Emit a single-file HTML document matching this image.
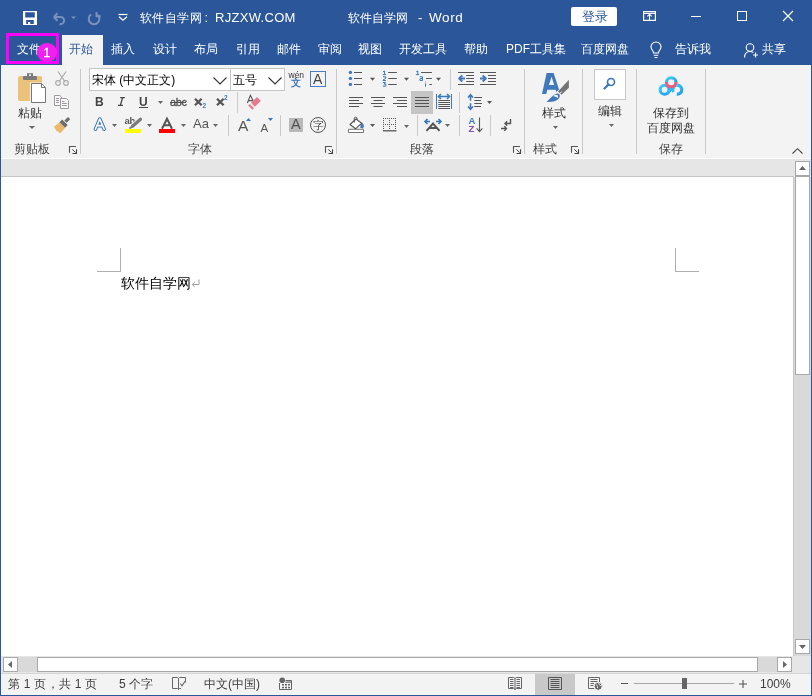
<!DOCTYPE html>
<html><head><meta charset="utf-8">
<style>
*{box-sizing:border-box}
html,body{margin:0;padding:0;width:812px;height:696px;overflow:hidden;background:#fff;font-family:"Liberation Sans",sans-serif;}
.a{position:absolute;white-space:nowrap}
svg.a{overflow:visible}
.tt{color:#fff;font-size:13px;line-height:16px}
.tab{color:#fff;font-size:12px;line-height:16px;top:41px}
.sep{width:1px;background:#c8c8c8}
.gl{font-size:12px;color:#444;line-height:14px;top:141.5px}
.rl{font-size:12px;color:#333;line-height:14px}
.st{font-size:12px;color:#3c3c3c;line-height:14px;top:677px}
</style></head><body><div style="position:absolute;left:0;top:0;width:812px;height:696px;will-change:transform">
<!-- frame -->
<div class="a" style="left:0;top:0;width:812px;height:65px;background:#2b579a"></div>
<div class="a" style="left:0;top:65px;width:812px;height:93px;background:#f3f3f3"></div>
<div class="a" style="left:0;top:158px;width:812px;height:1px;"></div>
<div class="a" style="left:0;top:159px;width:812px;height:17px;background:#e6e6e6"></div>
<div class="a" style="left:0;top:176px;width:794px;height:1px;background:#c6c6c6"></div>
<div class="a" style="left:0;top:656px;width:812px;height:17px;background:#e6e6e6"></div>
<div class="a" style="left:0;top:673px;width:812px;height:1px;background:#d6d6d6"></div>
<div class="a" style="left:0;top:674px;width:812px;height:22px;background:#f3f3f3"></div>
<div class="a" style="left:0;top:0;width:1px;height:696px;background:#2b579a"></div>
<div class="a" style="left:811px;top:0;width:1px;height:696px;background:#2b579a"></div>
<div class="a" style="left:0;top:695px;width:812px;height:1px;background:#2b579a"></div>

<!-- QAT -->
<svg class="a" style="left:23px;top:11px" width="14" height="14" viewBox="0 0 14 14">
 <path fill="#fff" fill-rule="evenodd" d="M0 0H14V14H0Z M2.2 1.2H11.8V6.6H2.2Z M3.2 9.1H10.8V12.9H7.2V11.1H5V12.9H3.2Z"/>
</svg>
<svg class="a" style="left:52px;top:12px" width="26" height="13" viewBox="0 0 26 13">
 <path d="M1.8 5 L5.5 1.3 M1.8 5 L5.5 8.7 M1.8 5 H8.5 A3.6 3.6 0 0 1 8.5 12.2 H7.5" fill="none" stroke="#7891bd" stroke-width="2"/>
 <path d="M19 4.5H24L21.5 7Z" fill="#7891bd"/>
</svg>
<svg class="a" style="left:87px;top:12px" width="14" height="13" viewBox="0 0 14 13">
 <path d="M4.2 2.4 A5.3 5.3 0 1 0 10.2 2.6" fill="none" stroke="#7891bd" stroke-width="2"/>
 <path d="M9.5 0 V4.2 H13.7" fill="none" stroke="#7891bd" stroke-width="1.9"/>
</svg>
<svg class="a" style="left:118px;top:13px" width="10" height="8" viewBox="0 0 10 8">
 <path d="M0.5 1.5H9.5" stroke="#fff" stroke-width="1.2"/>
 <path d="M1 3.8 L5 7.2 L9 3.8" fill="none" stroke="#fff" stroke-width="1.2"/>
</svg>

<!-- title text -->
<div class="a tt" style="left:140px;top:10px;font-size:12px;letter-spacing:0.4px">软件自学网</div><div class="a tt" style="left:204.5px;top:10px">:</div><div class="a tt" style="left:215px;top:10px;letter-spacing:0.3px">RJZXW.COM</div>
<div class="a tt" style="left:348px;top:10px;font-size:12px">软件自学网</div><div class="a tt" style="left:418px;top:10px">-</div><div class="a tt" style="left:429px;top:10px;font-size:13.5px;letter-spacing:0.6px">Word</div>
<div class="a" style="left:571px;top:7px;width:46px;height:19px;background:#fff;border-radius:2px"></div>
<div class="a" style="left:582px;top:9px;font-size:12.5px;line-height:16px;color:#2b579a">登录</div>
<!-- window buttons -->
<svg class="a" style="left:643px;top:11px" width="13" height="10" viewBox="0 0 13 10">
 <path d="M0.6 0.6H12.4V9.4H0.6Z" fill="none" stroke="#fff" stroke-width="1.2"/>
 <path d="M1 2.4H12" stroke="#fff" stroke-width="1.1"/>
 <path d="M6.5 9V2.8 M4.3 5.4 L6.5 3.2 L8.7 5.4" fill="none" stroke="#fff" stroke-width="1.1"/>
</svg>
<div class="a" style="left:691px;top:16px;width:10px;height:1px;background:#fff"></div>
<div class="a" style="left:737px;top:11px;width:10px;height:10px;border:1px solid #fff"></div>
<svg class="a" style="left:783px;top:11px" width="10" height="10" viewBox="0 0 10 10">
 <path d="M0 0L10 10M10 0L0 10" stroke="#fff" stroke-width="1.1"/>
</svg>

<!-- tabs -->
<div class="a" style="left:62px;top:35px;width:41px;height:30px;background:#f3f3f3"></div>
<div class="a tab" style="left:69px;color:#2b579a">开始</div>
<div class="a tab" style="left:111px">插入</div>
<div class="a tab" style="left:153px">设计</div>
<div class="a tab" style="left:194px">布局</div>
<div class="a tab" style="left:236px">引用</div>
<div class="a tab" style="left:277px">邮件</div>
<div class="a tab" style="left:318px">审阅</div>
<div class="a tab" style="left:358px">视图</div>
<div class="a tab" style="left:399px">开发工具</div>
<div class="a tab" style="left:464px">帮助</div>
<div class="a tab" style="left:506px">PDF工具集</div>
<div class="a tab" style="left:581px">百度网盘</div>
<div class="a tab" style="left:675px">告诉我</div>
<div class="a tab" style="left:762px">共享</div>
<svg class="a" style="left:650px;top:42px" width="12" height="17" viewBox="0 0 12 17">
 <path d="M3.5 11 C3.5 8.5 1 7.5 1 5 A5 5 0 0 1 11 5 C11 7.5 8.5 8.5 8.5 11 Z M3.8 13.2H8.2 M4.5 15.5H7.5" fill="none" stroke="#fff" stroke-width="1.1"/>
</svg>
<svg class="a" style="left:744px;top:43px" width="15" height="15" viewBox="0 0 15 15">
 <circle cx="6" cy="4.5" r="3.8" fill="none" stroke="#fff" stroke-width="1.1"/>
 <path d="M0.6 14.5 C0.6 10.5 3 8.5 6 8.5 C7.5 8.5 8.5 9 9.3 9.6" fill="none" stroke="#fff" stroke-width="1.1"/>
 <path d="M11.5 9.5V14.5M9 12H14" stroke="#fff" stroke-width="1.1"/>
</svg>
<div class="a tab" style="left:17px">文件</div>
<!-- marker -->
<div class="a" style="left:6px;top:33px;width:53px;height:31px;border:3px solid #f0f"></div>
<div class="a" style="left:37px;top:43px;width:19.5px;height:19px;border-radius:50%;background:#f020f0;color:#fff;font-size:12.5px;line-height:21px;text-align:center;-webkit-text-stroke:0.3px #fff">1</div>

<!-- ribbon separators -->
<div class="a sep" style="left:80px;top:69px;height:85px"></div>
<div class="a sep" style="left:336px;top:69px;height:85px"></div>
<div class="a sep" style="left:524px;top:69px;height:85px"></div>
<div class="a sep" style="left:582px;top:69px;height:85px"></div>
<div class="a sep" style="left:636px;top:69px;height:85px"></div>
<div class="a sep" style="left:705px;top:69px;height:85px"></div>
<div class="a gl" style="left:14px">剪贴板</div>
<div class="a gl" style="left:188px">字体</div>
<div class="a gl" style="left:410px">段落</div>
<div class="a gl" style="left:533px">样式</div>
<div class="a gl" style="left:659px">保存</div>

<!-- clipboard group -->
<svg class="a" style="left:17px;top:72px" width="32" height="32" viewBox="0 0 32 32">
 <rect x="1" y="4" width="24" height="25" rx="2" fill="#ebc27a"/>
 <rect x="6" y="4" width="14" height="4" rx="1" fill="#7a7a7a"/>
 <path d="M10 1.2 H16 V5 H10Z" fill="#7a7a7a"/>
 <rect x="12" y="2.3" width="2" height="1.6" fill="#f3f3f3"/>
 <path d="M14 11.5 H24.5 L28.5 15.5 V30.5 H14Z" fill="#fff" stroke="#f3f3f3" stroke-width="2.2"/>
 <path d="M14.5 11.5 H24.5 L28.5 15.5 V30.5 H14.5Z" fill="#fff" stroke="#767676" stroke-width="1"/>
 <path d="M24.5 11.5 V15.5 H28.5" fill="none" stroke="#767676" stroke-width="1"/>
</svg>
<div class="a rl" style="left:18px;top:106px;font-size:12px;line-height:15px">粘贴</div>
<svg class="a" style="left:29px;top:126px" width="6" height="3" viewBox="0 0 6 3"><path d="M0 0H6L3 3Z" fill="#666"/></svg>
<svg class="a" style="left:55px;top:71px" width="14" height="15" viewBox="0 0 14 15">
 <path d="M3 0.5 L9.5 10 M11 0.5 L4.5 10" stroke="#aaa" stroke-width="1.2" fill="none"/>
 <circle cx="3" cy="12" r="2.3" fill="none" stroke="#aaa" stroke-width="1.2"/>
 <circle cx="11" cy="12" r="2.3" fill="none" stroke="#aaa" stroke-width="1.2"/>
</svg>
<svg class="a" style="left:50px;top:90px" width="24" height="44" viewBox="50 90 24 44">
 <path d="M54.5 95.5 H59.8 L61.5 97.2 V105.5 H54.5Z" fill="#fbf8fb" stroke="#9a9a9a" stroke-width="1"/>
 <path d="M56 98.5H59 M56 100.5H59 M56 102.5H59" stroke="#9a9a9a" stroke-width="1"/>
 <path d="M60.5 98.5 H66.3 L68.5 100.7 V108.5 H60.5Z" fill="#fbf8fb" stroke="#9a9a9a" stroke-width="1"/>
 <path d="M62 101.5H64.5 M62 103.5H67 M62 105.5H67" stroke="#9a9a9a" stroke-width="1"/>
 <g transform="translate(63.6 123.6) rotate(45)">
  <path d="M-3.9 1.9 H3.9 L4.6 9 L0 10.2 L-4.6 9Z" fill="#e9ba6c"/>
  <rect x="-3.9" y="-1.9" width="7.8" height="3.8" fill="#6e6e6e"/>
  <rect x="-1.6" y="-7.8" width="3.2" height="5.1" fill="#6e6e6e"/>
 </g>
</svg>

<svg class="a" style="left:68px;top:145px" width="10" height="10" viewBox="0 0 10 10">
 <path d="M1.5 7.7V1.5H8" fill="none" stroke="#555" stroke-width="1.1"/>
 <path d="M4.4 4.4L7.6 7.6" stroke="#444" stroke-width="1"/>
 <path d="M8.5 4.2V8.5H4.5" fill="none" stroke="#444" stroke-width="1.1"/>
</svg>

<!-- font group -->
<div class="a" style="left:89px;top:68px;width:142px;height:23px;border:1px solid #c6c6c6;background:#fff"></div>
<div class="a" style="left:230px;top:68px;width:55px;height:23px;border:1px solid #c6c6c6;background:#fff"></div>
<div class="a" style="left:92px;top:72.5px;font-size:12px;line-height:15px;color:#000">宋体 (中文正文)</div>
<div class="a" style="left:233px;top:72.5px;font-size:12px;line-height:15px;color:#000">五号</div>
<svg class="a" style="left:213px;top:77px" width="14" height="8" viewBox="0 0 14 8"><path d="M0.5 0.5L7 7L13.5 0.5" fill="none" stroke="#333" stroke-width="1.1"/></svg>
<svg class="a" style="left:268px;top:77px" width="14" height="8" viewBox="0 0 14 8"><path d="M0.5 0.5L7 7L13.5 0.5" fill="none" stroke="#333" stroke-width="1.1"/></svg>
<div class="a" style="left:288.5px;top:70px;font-size:8.5px;line-height:10px;color:#333">wén</div>
<div class="a" style="left:291px;top:77px;font-size:10px;line-height:11px;color:#3b74b8;font-weight:bold">文</div>
<div class="a" style="left:310px;top:71px;width:16px;height:16px;border:1.5px solid #4a7dbd"></div>
<div class="a" style="left:313px;top:72px;font-size:14px;line-height:15px;color:#444">A</div>

<div class="a" style="left:95px;top:95px;font-size:12px;line-height:14px;color:#444;font-weight:bold">B</div>
<svg class="a" style="left:118px;top:97px" width="8" height="9" viewBox="0 0 8 9">
 <path d="M2.2 0.6H6.9 M0 8.3H4.9 M4.6 0.6 L2.4 8.3" fill="none" stroke="#444" stroke-width="1.3"/>
</svg>
<div class="a" style="left:139px;top:95px;font-size:12px;line-height:14px;color:#444;font-weight:bold">U</div>
<div class="a" style="left:139px;top:107px;width:9px;height:1px;background:#444"></div>
<svg class="a" style="left:158px;top:101px" width="5" height="3" viewBox="0 0 5 3"><path d="M0 0H5L2.5 3Z" fill="#666"/></svg>
<div class="a" style="left:170px;top:94.5px;font-size:11px;line-height:14px;color:#505050;letter-spacing:-0.4px;-webkit-text-stroke:0.3px #505050">abc</div>
<div class="a" style="left:170px;top:102px;width:16px;height:1px;background:#505050"></div>
<svg class="a" style="left:194px;top:98px" width="9" height="8" viewBox="0 0 9 8"><path d="M1 0.8 L7.6 7.3 M7.6 0.8 L1 7.3" stroke="#555" stroke-width="2.3"/></svg>
<div class="a" style="left:202.5px;top:101.5px;font-size:6.5px;line-height:8px;color:#3f78bb;font-weight:bold">2</div>
<svg class="a" style="left:216px;top:98px" width="9" height="8" viewBox="0 0 9 8"><path d="M1 0.8 L7.6 7.3 M7.6 0.8 L1 7.3" stroke="#555" stroke-width="2.3"/></svg>
<div class="a" style="left:224px;top:94px;font-size:6.5px;line-height:8px;color:#3f78bb;font-weight:bold">2</div>
<div class="a sep" style="left:237px;top:92px;height:21px;"></div>
<svg class="a" style="left:246px;top:95px" width="16" height="16" viewBox="0 0 16 16">
 <path d="M1.4 8 L4.4 0.3 L7.2 5.8 M2.6 5.6H6.6" fill="none" stroke="#555" stroke-width="1.1"/>
 <path d="M5 7.8 L11 2 L14.8 6 L8.8 11.8Z" fill="#e5798f"/>
 <path d="M2.2 10.5 L3.8 9 L8 13.2 L6.3 14.8Z" fill="#e5798f"/>
</svg>

<svg class="a" style="left:93px;top:117px" width="14" height="15" viewBox="0 0 14 15">
 <path d="M2.4 12.2 L6.8 2 L11.2 12.2 M4.3 8.6H9.3" fill="none" stroke="#3f78bb" stroke-width="3.6" stroke-linejoin="round" stroke-linecap="round"/>
 <path d="M2.4 12.2 L6.8 2 L11.2 12.2 M4.3 8.6H9.3" fill="none" stroke="#fff" stroke-width="1.6" stroke-linejoin="round" stroke-linecap="round"/>
</svg>
<svg class="a" style="left:112px;top:124px" width="5" height="3" viewBox="0 0 5 3"><path d="M0 0H5L2.5 3Z" fill="#666"/></svg>
<div class="a" style="left:124.5px;top:115px;font-size:9.5px;line-height:11px;color:#555;font-weight:bold;letter-spacing:-0.3px">ab</div>
<svg class="a" style="left:127px;top:117px" width="15" height="13" viewBox="0 0 15 13">
 <path d="M3 11 L13.5 2" stroke="#f3f3f3" stroke-width="4.5"/>
 <path d="M5.5 9.2 L13.5 2.2" stroke="#7a7a7a" stroke-width="3.2" stroke-linecap="round"/>
 <path d="M2.5 11.5 L5.5 9.2" stroke="#7a7a7a" stroke-width="1.8"/>
</svg>
<div class="a" style="left:125px;top:129px;width:16px;height:4px;background:#ffff00"></div>
<svg class="a" style="left:147px;top:124px" width="5" height="3" viewBox="0 0 5 3"><path d="M0 0H5L2.5 3Z" fill="#666"/></svg>
<svg class="a" style="left:161px;top:118px" width="12" height="11" viewBox="0 0 12 11">
 <path d="M1 10.8 L6 0.8 L11 10.8 M2.9 7.2H9.1" fill="none" stroke="#555" stroke-width="2"/>
</svg>
<div class="a" style="left:159px;top:129px;width:16px;height:4px;background:#ff0000"></div>
<svg class="a" style="left:181px;top:124px" width="5" height="3" viewBox="0 0 5 3"><path d="M0 0H5L2.5 3Z" fill="#666"/></svg>
<div class="a" style="left:193px;top:117px;font-size:13px;line-height:14px;color:#555">Aa</div>
<svg class="a" style="left:213px;top:124px" width="5" height="3" viewBox="0 0 5 3"><path d="M0 0H5L2.5 3Z" fill="#666"/></svg>
<div class="a sep" style="left:228px;top:115px;height:21px;"></div>
<div class="a" style="left:238px;top:117.5px;font-size:15.5px;line-height:16px;color:#555">A</div>
<svg class="a" style="left:246px;top:118px" width="5" height="3" viewBox="0 0 5 3"><path d="M0 3H5L2.5 0Z" fill="#3b74b8"/></svg>
<div class="a" style="left:260.5px;top:121.5px;font-size:11.5px;line-height:12px;color:#555">A</div>
<svg class="a" style="left:268px;top:118px" width="5" height="3" viewBox="0 0 5 3"><path d="M0 0H5L2.5 3Z" fill="#3b74b8"/></svg>
<div class="a sep" style="left:280px;top:115px;height:21px;"></div>
<div class="a" style="left:289px;top:118px;width:14px;height:14px;background:#b9b9b9"></div>
<div class="a" style="left:291px;top:117px;font-size:14.5px;line-height:15px;color:#505050">A</div>
<div class="a" style="left:310px;top:117px;width:16px;height:16px;border:1px solid #555;border-radius:50%"></div>
<div class="a" style="left:312.5px;top:118.5px;font-size:11px;line-height:13px;color:#444">字</div>
<svg class="a" style="left:324px;top:145px" width="10" height="10" viewBox="0 0 10 10">
 <path d="M1.5 7.7V1.5H8" fill="none" stroke="#555" stroke-width="1.1"/>
 <path d="M4.4 4.4L7.6 7.6" stroke="#444" stroke-width="1"/>
 <path d="M8.5 4.2V8.5H4.5" fill="none" stroke="#444" stroke-width="1.1"/>
</svg>

<!-- paragraph group -->
<svg class="a" style="left:348px;top:70px" width="100" height="17" viewBox="0 0 100 17">
 <g fill="#3f78bb"><circle cx="2.4" cy="2.4" r="1.7"/><circle cx="2.4" cy="8.4" r="1.7"/><circle cx="2.4" cy="14.4" r="1.7"/></g>
 <g stroke="#555" stroke-width="1"><path d="M6 2.5H14 M6 8.5H14 M6 14.5H14"/></g>
 <path d="M22 7.8H27L24.5 10.8Z" fill="#555"/>
 <g fill="none" stroke="#3f78bb" stroke-width="1">
  <path d="M35 1.8 L36.6 1 V4.8 M34.7 4.6H38"/>
  <path d="M35 6.8 H37.8 V8.3 L35 10 V10.5 H38"/>
  <path d="M34.8 12.5 H37.6 L36 14.2 H37.8 V16.2 H34.8"/>
 </g>
 <g stroke="#555" stroke-width="1"><path d="M40.2 2.5H48.8 M40.2 8.5H48.8 M40.2 14.5H48.8"/></g>
 <path d="M56 7.8H61L58.5 10.8Z" fill="#555"/>
 <g fill="none" stroke="#3f78bb" stroke-width="1">
  <path d="M68.2 1.8 L69.8 1 V4.8 M67.9 4.6H71.2"/>
  <path d="M71.8 6.8 H74.5 V10.5 H72 V8.6 H74.5"/>
  <path d="M77.5 11.5 V12.3 M77.5 13.3 V16.6"/>
 </g>
 <g stroke="#555" stroke-width="1"><path d="M73.1 2.5H83.9 M78.1 8.5H83.9 M81.3 14.5H83.9"/></g>
 <path d="M88 7.8H93L90.5 10.8Z" fill="#555"/>
</svg>
<div class="a sep" style="left:450px;top:69px;height:21px;"></div>
<svg class="a" style="left:458px;top:71px" width="40" height="15" viewBox="0 0 40 15">
 <g stroke="#555" stroke-width="1">
  <path d="M0 1.5H16 M8.2 4.5H16 M8.2 7.5H16 M8.2 10.5H16 M0 13.5H16"/>
  <path d="M22 1.5H38 M30 4.5H38 M30 7.5H38 M30 10.5H38 M22 13.5H38"/>
 </g>
 <g fill="none" stroke="#3f78bb" stroke-width="2">
  <path d="M1.5 7.5H7"/><path d="M4.3 4.5L1.2 7.5L4.3 10.5" stroke-linejoin="round"/>
  <path d="M22 7.5H27.5"/><path d="M24.7 4.5L27.8 7.5L24.7 10.5" stroke-linejoin="round"/>
 </g>
</svg>
<!-- align row -->
<div class="a" style="left:411px;top:91px;width:22px;height:23px;background:#c5c5c5"></div>
<svg class="a" style="left:348px;top:96px" width="110" height="15" viewBox="0 0 110 15">
 <g stroke="#555" stroke-width="1">
  <path d="M1 1.5H15 M1 4.5H11 M1 7.5H15 M1 10.5H11"/>
  <path d="M23 1.5H37 M25.5 4.5H34.5 M23 7.5H37 M25.5 10.5H34.5"/>
  <path d="M45 1.5H59 M49 4.5H59 M45 7.5H59 M49 10.5H59"/>
  <path d="M67 1.5H81 M67 4.5H81 M67 7.5H81 M67 10.5H81"/>
 </g>
</svg>
<svg class="a" style="left:436px;top:93px" width="17" height="17" viewBox="0 0 17 17">
 <path d="M0.5 1V16 M15.5 1V16" stroke="#3f78bb" stroke-width="1"/>
 <g fill="none" stroke="#3f78bb" stroke-width="1.5"><path d="M2.5 3.5H13.5 M5 1L2.4 3.5L5 6 M11 1L13.6 3.5L11 6"/></g>
 <g stroke="#555" stroke-width="1"><path d="M2.3 7.5H14 M2.3 9.5H14 M2.3 11.5H14 M2.3 13.5H14 M2.3 15.5H14"/></g>
</svg>
<div class="a sep" style="left:459px;top:92px;height:21px;"></div>
<svg class="a" style="left:467px;top:93px" width="26" height="18" viewBox="0 0 26 18">
 <g fill="none" stroke="#3f78bb" stroke-width="1.6"><path d="M3.5 2V7.8 M1 4.5L3.5 1.8L6 4.5 M3.5 10.2V16 M1 13.5L3.5 16.2L6 13.5"/></g>
 <g stroke="#555" stroke-width="1"><path d="M7.3 4.5H15 M7.3 7.5H14 M7.3 10.5H15 M7.3 13.5H14"/></g>
 <path d="M20 8H25L22.5 11Z" fill="#555"/>
</svg>
<!-- bottom row -->
<svg class="a" style="left:347px;top:116px" width="30" height="17" viewBox="0 0 30 17">
 <path d="M1.5 13.3H16.5V16.5H1.5Z" fill="#fff" stroke="#777" stroke-width="1"/>
 <path d="M14 6.5 C16 7 17 8.5 16.8 10.5 L16 12.5 L13.2 11.8 Z" fill="#3f78bb"/>
 <path d="M3 8.5 L9 3 L14.7 7.2 L8.6 12.8 Z" fill="#fff" stroke="#555" stroke-width="1.1" stroke-linejoin="round"/>
 <path d="M7.3 6.5 V2.2 Q7.3 1.2 8.6 1.2 Q10 1.2 10 2.2 V4" fill="none" stroke="#555" stroke-width="1"/>
 <path d="M23 8H28L25.5 11Z" fill="#555"/>
</svg>
<svg class="a" style="left:383px;top:118px" width="28" height="15" viewBox="0 0 28 15">
 <g fill="#555">
  <path d="M0 0h1v1H0z M2 0h1v1H2z M4 0h1v1H4z M6 0h1v1H6z M8 0h1v1H8z M10 0h1v1h-1z M12 0h1v1h-1z"/>
  <path d="M0 2h1v1H0z M0 4h1v1H0z M0 6h1v1H0z M0 8h1v1H0z M0 10h1v1H0z"/>
  <path d="M12 2h1v1h-1z M12 4h1v1h-1z M12 6h1v1h-1z M12 8h1v1h-1z M12 10h1v1h-1z"/>
  <path d="M6 2h1v1H6z M6 4h1v1H6z M6 8h1v1H6z M6 10h1v1H6z"/>
  <path d="M2 6h1v1H2z M4 6h1v1H4z M6 6h1v1H6z M8 6h1v1H8z M10 6h1v1h-1z"/>
 </g>
 <path d="M0 12.8H13.5" stroke="#555" stroke-width="1.3"/>
 <path d="M21 7H26L23.5 10Z" fill="#666"/>
</svg>
<div class="a sep" style="left:417px;top:115px;height:21px;"></div>
<svg class="a" style="left:424px;top:118px" width="28" height="14" viewBox="0 0 28 14">
 <g fill="none" stroke="#3b74b8" stroke-width="1.6"><path d="M1 3.5H6 M3.5 1L1 3.5L3.5 6 M12 3.5H17 M14.5 1L17 3.5L14.5 6"/></g>
 <path d="M2.5 12.8 L9 5.5 L15.5 12.8 M5 10H13" fill="none" stroke="#555" stroke-width="2"/>
 <path d="M21 6H26L23.5 9Z" fill="#666"/>
</svg>
<div class="a sep" style="left:459px;top:115px;height:21px;"></div>
<div class="a" style="left:468.5px;top:115.5px;font-size:9.5px;line-height:9px;color:#3f78bb;font-weight:bold">A</div>
<div class="a" style="left:468.5px;top:123.5px;font-size:9.5px;line-height:9px;color:#7e4fa7;font-weight:bold">Z</div>
<svg class="a" style="left:475px;top:117px" width="8" height="16" viewBox="0 0 8 16">
 <path d="M4.5 0.5V14.5 M1.6 11.3L4.5 14.6L7.4 11.3" fill="none" stroke="#555" stroke-width="1.1"/>
</svg>
<div class="a sep" style="left:490px;top:115px;height:21px;"></div>
<svg class="a" style="left:500px;top:118px" width="12" height="14" viewBox="0 0 12 14">
 <g fill="none" stroke="#555" stroke-width="1.4">
  <path d="M10.5 1V5.5H5.2 M7.2 3.3L5 5.5L7.2 7.7"/>
  <path d="M1 10.5H6.5 M4.3 8.3L6.5 10.5L4.3 12.7"/>
 </g>
</svg>
<svg class="a" style="left:512px;top:145px" width="10" height="10" viewBox="0 0 10 10">
 <path d="M1.5 7.7V1.5H8" fill="none" stroke="#555" stroke-width="1.1"/>
 <path d="M4.4 4.4L7.6 7.6" stroke="#444" stroke-width="1"/>
 <path d="M8.5 4.2V8.5H4.5" fill="none" stroke="#444" stroke-width="1.1"/>
</svg>

<!-- styles group -->
<svg class="a" style="left:536px;top:68px" width="40" height="36" viewBox="0 0 40 36">
 <path fill="#3f78bb" fill-rule="evenodd" d="M6 26 L10.6 5 H17.6 L23 21.5 L20.5 24 L19.6 21.8 H11.4 L10.2 26 Z M12.9 16.9 H18.2 L15.6 8.8 Z"/>
 <path fill="#737373" d="M22 23.5 L32.9 11.7 V19.7 L25.5 26.8 Z"/>
 <path d="M23 26.5 L25.8 23.5" stroke="#f3f3f3" stroke-width="1"/>
 <path fill="#3f78bb" d="M10.5 34 C13.5 31 16.5 28 19 26.3 C21.5 24.6 24.3 25.5 23.8 28.3 C23.3 31.2 20 33.4 15.5 33.8 Z"/>
 <path fill="#fff" d="M17.5 28.3 C18.5 26.8 20.6 26.3 21.8 27.6 C22.3 28.3 21.8 30 21.3 30 C20.5 29 19 28.3 17.5 28.3Z"/>
</svg>
<div class="a rl" style="left:542px;top:106px;font-size:12px;line-height:15px">样式</div>
<svg class="a" style="left:553px;top:126px" width="5" height="3" viewBox="0 0 5 3"><path d="M0 0H5L2.5 3Z" fill="#666"/></svg>
<svg class="a" style="left:570px;top:145px" width="10" height="10" viewBox="0 0 10 10">
 <path d="M1.5 7.7V1.5H8" fill="none" stroke="#555" stroke-width="1.1"/>
 <path d="M4.4 4.4L7.6 7.6" stroke="#444" stroke-width="1"/>
 <path d="M8.5 4.2V8.5H4.5" fill="none" stroke="#444" stroke-width="1.1"/>
</svg>
<!-- editing -->
<div class="a" style="left:594px;top:69px;width:32px;height:31px;border:1px solid #c8c8c8;background:#fff"></div>
<svg class="a" style="left:603px;top:77px" width="13" height="13" viewBox="0 0 13 13">
 <circle cx="8" cy="5" r="3.5" fill="none" stroke="#3b74b8" stroke-width="1.6"/>
 <path d="M5.5 7.5 L1.5 11.5" stroke="#3b74b8" stroke-width="2.2" stroke-linecap="round"/>
</svg>
<div class="a rl" style="left:598px;top:103.5px;font-size:12px;line-height:15px">编辑</div>
<svg class="a" style="left:609px;top:124px" width="5" height="3" viewBox="0 0 5 3"><path d="M0 0H5L2.5 3Z" fill="#666"/></svg>
<!-- baidu -->
<svg class="a" style="left:652px;top:70px" width="40" height="32" viewBox="0 0 40 32">
 <defs><linearGradient id="bg1" x1="0" y1="0" x2="1" y2="1"><stop offset="0" stop-color="#41d0f5"/><stop offset="1" stop-color="#1c9cf0"/></linearGradient></defs>
 <g fill="none" stroke="url(#bg1)" stroke-width="3.1">
  <circle cx="12.6" cy="19.7" r="4.5"/>
  <path d="M21.5 22 A4.5 4.5 0 1 1 24.8 24.1"/>
  <path d="M15 23.5 L21.5 17"/>
  <path d="M14.4 12.6 A4.8 4.8 0 0 1 24 12.6"/>
 </g>
 <path d="M14.4 12 A4.8 4.8 0 0 0 24 12" fill="none" stroke="#f05a7a" stroke-width="3.1"/>
</svg>
<div class="a rl" style="left:653px;top:105.5px;font-size:12px;line-height:15px">保存到</div>
<div class="a rl" style="left:647px;top:121px;font-size:12px;line-height:15px">百度网盘</div>
<svg class="a" style="left:792px;top:148px" width="11" height="6" viewBox="0 0 11 6">
 <path d="M0.5 5.5L5.5 0.7L10.5 5.5" fill="none" stroke="#444" stroke-width="1.1"/>
</svg>

<!-- doc -->
<div class="a" style="left:793px;top:177px;width:1px;height:479px;background:#c8c8c8"></div>
<div class="a" style="left:794px;top:177px;width:17px;height:479px;background:#d9d9d9"></div>
<div class="a" style="left:97px;top:271px;width:24px;height:1px;background:#b0b0b0"></div>
<div class="a" style="left:120px;top:248px;width:1px;height:24px;background:#b0b0b0"></div>
<div class="a" style="left:675px;top:271px;width:24px;height:1px;background:#b0b0b0"></div>
<div class="a" style="left:675px;top:248px;width:1px;height:24px;background:#b0b0b0"></div>
<div class="a" style="left:121px;top:275px;font-size:14px;line-height:17px;color:#000">软件自学网</div>

<!-- vertical scrollbar -->
<div class="a" style="left:795px;top:161px;width:15px;height:15px;border:1px solid #a8a8a8;background:#fff"></div>
<svg class="a" style="left:799px;top:166px" width="7" height="4" viewBox="0 0 7 4"><path d="M0 4H7L3.5 0Z" fill="#666"/></svg>
<div class="a" style="left:795px;top:176px;width:15px;height:199px;border:1px solid #a8a8a8;background:#fff"></div>
<div class="a" style="left:795px;top:639px;width:15px;height:15px;border:1px solid #a8a8a8;background:#fff"></div>
<svg class="a" style="left:799px;top:645px" width="7" height="4" viewBox="0 0 7 4"><path d="M0 0H7L3.5 4Z" fill="#666"/></svg>
<!-- horizontal scrollbar -->
<div class="a" style="left:18px;top:657px;width:759px;height:15px;background:#d9d9d9"></div>
<div class="a" style="left:3px;top:657px;width:15px;height:15px;border:1px solid #a8a8a8;background:#fff"></div>
<svg class="a" style="left:8px;top:661px" width="4" height="7" viewBox="0 0 4 7"><path d="M4 0V7L0 3.5Z" fill="#666"/></svg>
<div class="a" style="left:37px;top:657px;width:721px;height:15px;border:1px solid #a8a8a8;background:#fff"></div>
<div class="a" style="left:777px;top:657px;width:15px;height:15px;border:1px solid #a8a8a8;background:#fff"></div>
<svg class="a" style="left:783px;top:661px" width="4" height="7" viewBox="0 0 4 7"><path d="M0 0V7L4 3.5Z" fill="#666"/></svg>
<!-- return mark -->
<svg class="a" style="left:191px;top:279px" width="9" height="9" viewBox="0 0 9 9">
 <path d="M8 0.5V5.5H1.5 M3.8 3L1.2 5.5L3.8 8" fill="none" stroke="#a0a0a0" stroke-width="1"/>
</svg>
<!-- status icons -->
<svg class="a" style="left:172px;top:677px" width="14" height="13" viewBox="0 0 14 13">
 <path d="M0.5 0.5H5.5 L6.5 1.5 V12.5 L5.5 11.5 H0.5Z" fill="none" stroke="#666" stroke-width="1"/>
 <path d="M6.5 1.5 L7.5 0.5 H13.5 V5.5 M6.5 12.5 L7.5 11.5 H9" fill="none" stroke="#666" stroke-width="1"/>
 <path d="M8.3 6.5 L10 8.8 L13.3 4" fill="none" stroke="#666" stroke-width="1.1"/>
</svg>
<svg class="a" style="left:279px;top:677px" width="14" height="13" viewBox="0 0 14 13">
 <circle cx="3.2" cy="3.2" r="2.8" fill="#666"/>
 <path d="M0.5 6V12.5H12.5V3.5H6.5" fill="none" stroke="#666" stroke-width="1"/>
 <g fill="#666"><rect x="3" y="7" width="2" height="1.5"/><rect x="6" y="7" width="2" height="1.5"/><rect x="9" y="7" width="2" height="1.5"/>
 <rect x="3" y="9.8" width="2" height="1.5"/><rect x="6" y="9.8" width="2" height="1.5"/><rect x="9" y="9.8" width="2" height="1.5"/>
 <rect x="6.5" y="4.5" width="5.5" height="1.2"/></g>
</svg>
<svg class="a" style="left:508px;top:677px" width="14" height="13" viewBox="0 0 14 13">
 <path d="M0.5 0.5H5.5 L7 1.5 L8.5 0.5 H13.5 V11.5 H8.5 L7 12.5 L5.5 11.5 H0.5Z" fill="none" stroke="#666" stroke-width="1"/>
 <path d="M7 1.5V12.5" stroke="#666" stroke-width="1"/>
 <path d="M2 2.5H5.5 M2 4.5H5.5 M2 6.5H5.5 M2 8.5H5.5 M2 10.5H5.5 M8.5 2.5H12 M8.5 4.5H12 M8.5 6.5H12 M8.5 8.5H12 M8.5 10.5H12" stroke="#666" stroke-width="1"/>
</svg>
<div class="a" style="left:535px;top:674px;width:40px;height:21px;background:#c8c8c8"></div>
<svg class="a" style="left:548px;top:677px" width="14" height="13" viewBox="0 0 14 13">
 <path d="M0.5 0.5H13.5V12.5H0.5Z" fill="none" stroke="#555" stroke-width="1"/>
 <path d="M2.5 2.5H11.5 M2.5 4.5H11.5 M2.5 6.5H11.5 M2.5 8.5H11.5 M2.5 10.5H11.5" stroke="#555" stroke-width="1"/>
</svg>
<svg class="a" style="left:588px;top:677px" width="15" height="14" viewBox="0 0 15 14">
 <path d="M6.5 11.5H0.5V0.5H11.5V5" fill="none" stroke="#666" stroke-width="1"/>
 <path d="M2.5 2.5H9.5 M2.5 4.5H9.5 M2.5 6.5H6 M2.5 8.5H5.5" stroke="#666" stroke-width="1"/>
 <circle cx="10.2" cy="9.3" r="4" fill="#666" stroke="#f3f3f3" stroke-width="1"/>
 <path d="M8 7.8 C9 8 9.8 9 9.5 11 M10.8 6 C10.8 7.5 11.5 8.5 13.5 8.8" fill="none" stroke="#f3f3f3" stroke-width="0.9"/>
</svg>
<div class="a" style="left:621px;top:683px;width:7px;height:1.2px;background:#555"></div>
<div class="a" style="left:634px;top:683px;width:100px;height:1px;background:#a6a6a6"></div>
<div class="a" style="left:682px;top:678px;width:5px;height:11px;background:#666"></div>
<svg class="a" style="left:739px;top:680px" width="8" height="8" viewBox="0 0 8 8"><path d="M4 0V8M0 4H8" stroke="#555" stroke-width="1.1"/></svg>

<div class="a st" style="left:8px;letter-spacing:0.25px">第 1 页，共 1 页</div>
<div class="a st" style="left:119px">5 个字</div>
<div class="a st" style="left:204px">中文(中国)</div>
<div class="a st" style="left:760px">100%</div>
</div></body></html>
